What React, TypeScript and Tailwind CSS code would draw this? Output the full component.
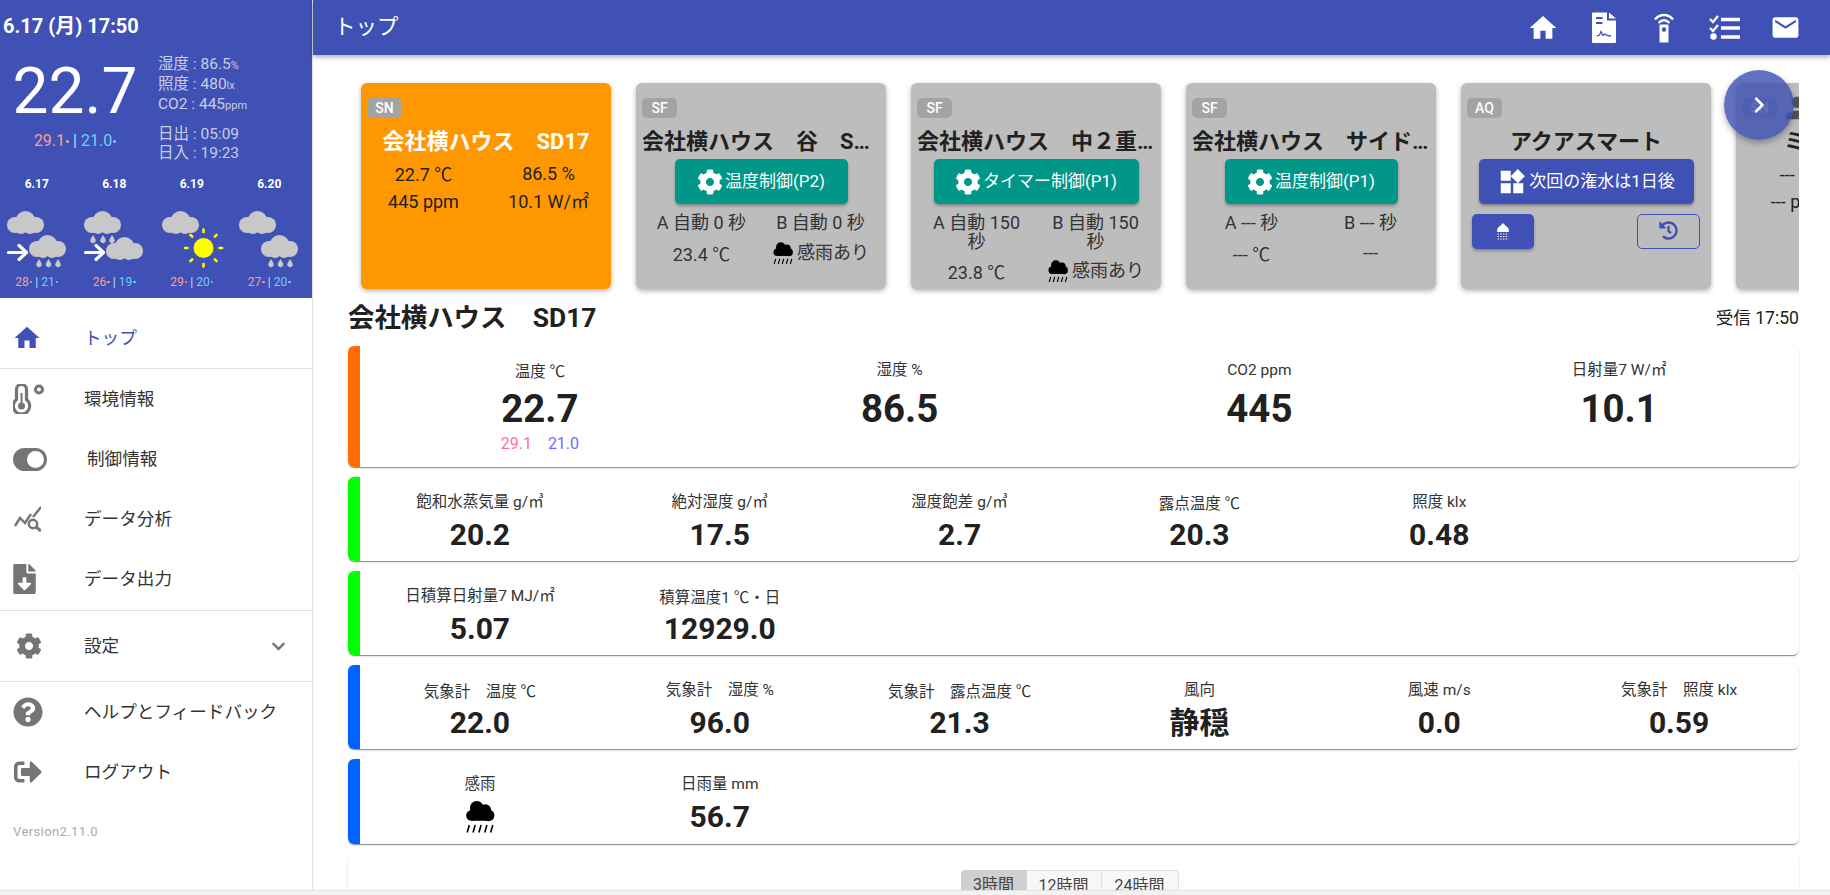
import type { ReactNode } from "react";
import { FaChevronDown, FaCog, FaFileDownload, FaHistory, FaQuestionCircle, FaSignOutAlt } from "react-icons/fa";
import { MdChevronRight, MdEmail, MdHome, MdPerson, MdWidgets } from "react-icons/md";

const matShadow = "shadow-[0_2px_1px_-1px_rgba(0,0,0,0.3),0_1px_1px_0_rgba(0,0,0,0.14),0_1px_3px_0_rgba(0,0,0,0.12)]";

// Roboto draws a narrow degree sign, the reference has the wide CJK one
function Txt({ text }: { text: string }) {
  const parts = text.split("℃");
  if (parts.length === 1) return <>{text}</>;
  return (
    <>
      {parts[0]}
      <span className="font-['Noto_Sans_CJK_JP']">℃</span>
      {parts[1]}
    </>
  );
}

function Cloud({ x, y, fill = "#c8c8c8" }: { x: number; y: number; fill?: string }) {
  return (
    <g transform={`translate(${x} ${y})`} fill={fill}>
      <circle cx="18.5" cy="10" r="10" />
      <circle cx="8" cy="14" r="8" />
      <circle cx="29" cy="14" r="8" />
      <circle cx="14" cy="17" r="6" />
      <circle cx="23" cy="17" r="6" />
    </g>
  );
}

function Drops({ xs, y }: { xs: number[]; y: number }) {
  return (
    <g fill="#c8c8c8">
      {xs.map((x) => (
        <path key={x} d={`M${x} ${y}l2.4 4a2.8 2.8 0 1 1-4.8 0z`} />
      ))}
    </g>
  );
}

function Arrow() {
  return <path d="M6.500 43.500h18M17 36.500l7.500 7-7.500 7" fill="none" stroke="#fff" strokeWidth="3.200" strokeLinecap="round" strokeLinejoin="round" />;
}

function Sun() {
  const rays = [0, 45, 90, 135, 180, 225, 270, 315];
  return (
    <g>
      <circle cx="46.5" cy="39" r="10" fill="#ffff00" />
      {rays.map((r) => (
        <line key={r} x1="46.5" y1="23" x2="46.5" y2="20.5" stroke="#ffff00" strokeWidth="2.6" strokeLinecap="round" transform={`rotate(${r} 46.5 39)`} />
      ))}
    </g>
  );
}

function WeatherIcon({ type }: { type: number }) {
  return (
    <svg viewBox="0 0 70 62" className="block mx-auto w-[70px] h-[62px]">
      <Cloud x={5} y={2} />
      {type === 1 && (
        <>
          <Arrow />
          <Cloud x={27} y={26} />
          <Drops xs={[37, 46.5, 56]} y={50} />
        </>
      )}
      {type === 2 && (
        <>
          <Drops xs={[14, 24, 33]} y={26} />
          <Arrow />
          <Cloud x={27} y={28} />
        </>
      )}
      {type === 3 && <Sun />}
      {type === 4 && (
        <>
          <Cloud x={27} y={26} />
          <Drops xs={[37, 46.5, 56]} y={50} />
        </>
      )}
    </svg>
  );
}

function RainCloud({ className }: { className: string }) {
  return (
    <svg viewBox="0 0 30 32" className={className}>
      <g fill="#000">
        <circle cx="12" cy="8" r="6.5" />
        <circle cx="20" cy="10" r="5.5" />
        <circle cx="7" cy="15" r="5" />
        <circle cx="23" cy="15" r="5.5" />
        <rect x="7" y="11" width="16" height="9" />
      </g>
      <path d="M5 24l-2 7M10.500 24l-2 7M16 24l-2 7M21.500 24l-2 7M27 24l-2 7" stroke="#000" strokeWidth="1.5" />
    </svg>
  );
}

function ThermoIcon() {
  return (
    <svg viewBox="0 0 32 30" className="w-[32px] h-[30px]" fill="none" stroke="#757575">
      <path d="M3.500 5.500a5 5 0 0 1 10 0v10a8.200 8.200 0 1 1-10 0z" strokeWidth="3.200" />
      <circle cx="8.500" cy="22" r="3.500" fill="#757575" stroke="none" />
      <rect x="7.500" y="9" width="2" height="12" fill="#757575" stroke="none" />
      <circle cx="26" cy="5.500" r="3.500" strokeWidth="3" />
    </svg>
  );
}

function ToggleIcon() {
  return (
    <span className="flex items-center justify-end w-[34px] h-[23px] rounded-full bg-[#757575] pr-[3px]">
      <span className="w-[17px] h-[17px] rounded-full bg-white" />
    </span>
  );
}

function AnalysisIcon() {
  return (
    <svg viewBox="0 0 28 26" className="w-[28px] h-[26px]" fill="none" stroke="#757575" strokeWidth="2.400">
      <path d="M2 20l5-8 5 5 6-9M20 11l8-10" />
      <circle cx="20" cy="18" r="4.200" />
      <path d="M23 21l5 4" strokeWidth="3" />
    </svg>
  );
}

function DocIcon() {
  return (
    <svg viewBox="0 0 24 31" className="w-[24px] h-[31px]">
      <path d="M0 1.500a1 1 0 0 1 1-1h14v8h9v21.500a1 1 0 0 1-1 1h-22a1 1 0 0 1-1-1z" fill="#fff" />
      <path d="M17 0.500l7 6h-7z" fill="#fff" />
      <path d="M4 6h6.500M4 11h6.500" stroke="#3f51b5" strokeWidth="2.200" />
      <path d="M4.500 24l3-1 1.500-3.500 2 4 2-1.500 2 1.500 4 .5" fill="none" stroke="#3f51b5" strokeWidth="1.300" />
    </svg>
  );
}

function RemoteIcon() {
  return (
    <svg viewBox="0 0 20 30" className="w-[20px] h-[30px]">
      <path d="M1 6.500c5-6 13-6 18 0M4.500 10c3.500-3.500 7.500-3.500 11 0" fill="none" stroke="#fff" strokeWidth="2.400" />
      <path d="M5.500 12.500a1 1 0 0 1 1-1h7a1 1 0 0 1 1 1v16a1 1 0 0 1-1 1h-7a1 1 0 0 1-1-1z" fill="#fff" />
      <circle cx="10" cy="16.500" r="2.200" fill="#3f51b5" />
    </svg>
  );
}

function ListIcon() {
  return (
    <svg viewBox="0 0 31 25" className="w-[31px] h-[25px]" fill="none" stroke="#fff">
      <path d="M1 4l3 3 5-6M1 13l3 3 5-6" strokeWidth="2.200" />
      <path d="M12 4.500h19M12 13h19M12 22h19" strokeWidth="3.600" />
      <circle cx="4.500" cy="21.500" r="3.200" fill="#fff" stroke="none" />
    </svg>
  );
}

function ShowerIcon() {
  return (
    <svg viewBox="0 0 14 17" className="w-[14px] h-[17px]">
      <path d="M7 0l3 3c2 1 3 3 3 6h-12c0-3 1-5 3-6z" fill="#fff" />
      <path d="M1.500 11h11M1.500 13.500h11M1.500 16h11" stroke="#fff" strokeWidth="1.200" strokeDasharray="1.500 1.200" />
    </svg>
  );
}

function Badge({ text }: { text: string }) {
  return (
    <span className="flex items-center justify-center h-[20px] w-[35px] rounded-[5px] bg-[#a3a3a3] text-white text-[14px] font-medium">
      {text}
    </span>
  );
}

function CardShell({ children, tone = "gray" }: { children: ReactNode; tone?: "gray" | "orange" }) {
  const bg = tone === "orange" ? "bg-[#ff9800]" : "bg-[#bdbdbd]";
  return (
    <div className={`shrink-0 w-[250px] h-[206px] rounded-[6px] pt-[15px] ${bg} shadow-[0_2px_5px_rgba(0,0,0,0.3)]`}>{children}</div>
  );
}

function CardTitle({ text, color = "text-[#212121]" }: { text: string; color?: string }) {
  return <div className={`mt-[7px] mx-[6px] text-center text-[22px] leading-[34px] font-bold truncate ${color}`}>{text}</div>;
}

function SensorCard({ badge, title, cells, tone, person }: { badge: string; title: string; cells: string[]; tone?: "orange"; person?: boolean }) {
  return (
    <CardShell tone={tone}>
      <div className="flex items-center pl-[6px] gap-[3px]">
        <Badge text={badge} />
        {person && <MdPerson className="w-[34px] h-[34px] -my-[8px] text-[#555]" />}
      </div>
      <CardTitle text={title} color={tone === "orange" ? "text-white" : undefined} />
      <div className="mt-[5px] grid grid-cols-2 gap-y-[9px] text-center text-[18px] leading-[19px] text-[#212121]">
        {cells.map((c) => (
          <div key={c} className="h-[19px]">
            <Txt text={c} />
          </div>
        ))}
      </div>
    </CardShell>
  );
}

function ControlCard({ title, button, btnW, a, b, temp, rain }: { title: string; button: string; btnW: string; a: string; b: string; temp: string; rain: string }) {
  return (
    <CardShell>
      <div className="pl-[6px]">
        <Badge text="SF" />
      </div>
      <CardTitle text={title} />
      <div className={`mx-auto h-[45px] rounded-[5px] bg-[#009688] flex items-center justify-center gap-[2px] text-white text-[17px] shadow-[0_2px_3px_rgba(0,0,0,0.3)] ${btnW}`}>
        <FaCog className="w-[26px] h-[26px]" />
        <span>{button}</span>
      </div>
      <div className="mt-[10px] mx-[6px] grid grid-cols-2 gap-y-[11px] text-center text-[18px] leading-[18.5px] text-[#333]">
        <div className="px-[8px]">{a}</div>
        <div className="px-[8px]">{b}</div>
        <div className="h-[18.5px]">
          <Txt text={temp} />
        </div>
        <div className="flex items-center justify-center gap-[3px]">
          {rain !== "---" && <RainCloud className="w-[22px] h-[24px] -my-[4px]" />}
          <span>{rain}</span>
        </div>
      </div>
    </CardShell>
  );
}

function AquaCard() {
  return (
    <CardShell>
      <div className="pl-[6px]">
        <Badge text="AQ" />
      </div>
      <CardTitle text="アクアスマート" />
      <div className="mx-auto w-[215px] h-[45px] rounded-[5px] bg-[#3f51b5] flex items-center justify-center gap-[2px] text-white text-[17px] shadow-[0_2px_3px_rgba(0,0,0,0.3)]">
        <MdWidgets className="w-[30px] h-[30px]" />
        <span>次回の潅水は1日後</span>
      </div>
      <div className="mt-[10px] pl-[11px] pr-[11px] flex justify-between">
        <div className="w-[62px] h-[35px] rounded-[5px] bg-[#3f51b5] flex items-center justify-center shadow-[0_2px_3px_rgba(0,0,0,0.3)]">
          <ShowerIcon />
        </div>
        <div className="w-[63px] h-[35px] rounded-[5px] border border-[#3f51b5] flex items-center justify-center pb-[2px]">
          <FaHistory className="w-[19px] h-[19px] text-[#3f51b5]" />
        </div>
      </div>
    </CardShell>
  );
}

type Metric = { label: string; value?: string; icon?: boolean };

function MetricRow({ color, items, h = "h-[84px]" }: { color: string; items: Metric[]; h?: string }) {
  return (
    <div className={`flex rounded-[6px] bg-white overflow-hidden ${h} ${matShadow}`}>
      <div className={`w-[12px] shrink-0 ${color}`} />
      <div className="flex-1 grid grid-cols-6">
        {items.map((m) => (
          <div key={m.label} className="pt-[15px] text-center">
            <div className="h-[20px] text-[15.5px] leading-[20px] text-[#333]">
              <Txt text={m.label} />
            </div>
            <div className="mt-[5px] h-[36px] text-[30px] leading-[36px] font-bold text-[#212121]">
              {m.icon ? <RainCloud className="mx-auto w-[32px] h-[35px]" /> : m.value}
            </div>
          </div>
        ))}
      </div>
    </div>
  );
}

function BigMetric({ label, value, children }: { label: string; value: string; children?: ReactNode }) {
  return (
    <div className="pt-[14px]">
      <div className="h-[20px] text-[15.5px] leading-[20px] text-[#333]">
        <Txt text={label} />
      </div>
      <div className="mt-[6px] text-[38.4px] leading-[46px] font-bold">{value}</div>
      {children}
    </div>
  );
}

function TempPair({ hi, lo, small }: { hi: string; lo: string; small?: boolean }) {
  const dot = small ? "w-[2.5px] h-[2.5px]" : "w-[3px] h-[3px]";
  return (
    <span>
      <span className="text-[#ff9e93]">
        {hi}
        <span className={`inline-block rounded-full bg-[#ff9e93] align-[3px] ml-[1px] ${dot}`} />
      </span>
      <span className="text-[#a9e4ff]"> | </span>
      <span className="text-[#6fd0f5]">
        {lo}
        <span className={`inline-block rounded-full bg-[#6fd0f5] align-[3px] ml-[1px] ${dot}`} />
      </span>
    </span>
  );
}

const forecast = [
  { date: "6.17", type: 1, hi: "28", lo: "21" },
  { date: "6.18", type: 2, hi: "26", lo: "19" },
  { date: "6.19", type: 3, hi: "29", lo: "20" },
  { date: "6.20", type: 4, hi: "27", lo: "20" },
];

function Stat({ label, value, unit }: { label: string; value: string; unit?: string }) {
  return (
    <div>
      {label} : {value}
      {unit && <span className="text-[11px]">{unit}</span>}
    </div>
  );
}

function NavItem({ icon, label, active, textPad = "", className = "h-[60px]", right }: { icon: ReactNode; label: string; active?: boolean; textPad?: string; className?: string; right?: ReactNode }) {
  return (
    <div className={`flex items-center ${className}`}>
      <div className="w-[84px] pl-[13px] shrink-0 flex items-center">{icon}</div>
      <div className={`flex-1 text-[17.6px] ${textPad} ${active ? "text-[#3f51b5]" : "text-[#333]"}`}>{label}</div>
      {right}
    </div>
  );
}

function Sidebar() {
  return (
    <aside className="w-[313px] shrink-0 border-r border-[#e0e0e0] bg-white">
      <div className="h-[298px] bg-[#3f51b5] text-white">
        <div className="h-[52px] pl-[3px] flex items-center text-[20px] font-bold">6.17 (月) 17:50</div>
        <div className="flex pt-[3px]">
          <div className="w-[150px] text-center">
            <div className="text-[64px] leading-[74px] font-normal">22.7</div>
            <div className="text-[16px] leading-[24px]">
              <TempPair hi="29.1" lo="21.0" />
            </div>
          </div>
          <div className="pl-[8px] text-[15.5px] leading-[19px] text-[#c9cde0]">
            <Stat label="湿度" value="86.5" unit="%" />
            <Stat label="照度" value="480" unit="lx" />
            <Stat label="CO2" value="445" unit="ppm" />
            <div className="h-[10px]" />
            <Stat label="日出" value="05:09" />
            <Stat label="日入" value="19:23" />
          </div>
        </div>
        <div className="grid grid-cols-4 w-[310px] -ml-[2px] mt-[13px]">
          {forecast.map((f) => (
            <div key={f.date} className="text-center">
              <div className="text-[12px] leading-[16px] font-bold">{f.date}</div>
              <div className="mt-[17px]">
                <WeatherIcon type={f.type} />
              </div>
              <div className="text-[12px] leading-[20px] mt-[1px]">
                <TempPair hi={f.hi} lo={f.lo} small />
              </div>
            </div>
          ))}
        </div>
      </div>
      <nav>
        <div className="pt-[10px] border-b border-[#e0e0e0]">
          <NavItem active label="トップ" icon={<MdHome className="w-[30px] h-[30px] text-[#3f51b5] -ml-[1px]" />} />
        </div>
        <NavItem label="環境情報" icon={<ThermoIcon />} />
        <NavItem label="制御情報" textPad="pl-[3px]" icon={<ToggleIcon />} />
        <NavItem label="データ分析" icon={<AnalysisIcon />} />
        <div className="border-b border-[#e0e0e0] pb-[1px]">
          <NavItem label="データ出力" icon={<FaFileDownload className="w-[23px] h-[30px] text-[#757575]" />} />
        </div>
        <div className="border-b border-[#e0e0e0]">
          <NavItem
            label="設定"
            className="h-[70px]"
            icon={<FaCog className="w-[26px] h-[26px] text-[#757575] ml-[3px]" />}
            right={<FaChevronDown className="w-[15px] h-[15px] mr-[26px] text-[#757575]" />}
          />
        </div>
        <NavItem label="ヘルプとフィードバック" icon={<FaQuestionCircle className="w-[30px] h-[30px] text-[#757575]" />} />
        <NavItem label="ログアウト" icon={<FaSignOutAlt className="w-[30px] h-[28px] text-[#757575]" />} />
        <div className="pl-[13px] pt-[20px] text-[13px] leading-[20px] tracking-[0.4px] text-[#aaa]">Version2.11.0</div>
      </nav>
    </aside>
  );
}

function Header() {
  return (
    <header className="relative z-10 h-[55px] shrink-0 bg-[#3f51b5] flex items-center pl-[21px] pr-[29px] text-white shadow-[0_2px_5px_rgba(0,0,0,0.35)]">
      <div className="flex-1 text-[21.5px]">トップ</div>
      <div className="flex items-center">
        <MdHome className="w-[32px] h-[32px]" />
        <div className="ml-[33px]">
          <DocIcon />
        </div>
        <div className="ml-[38px]">
          <RemoteIcon />
        </div>
        <div className="ml-[35px]">
          <ListIcon />
        </div>
        <MdEmail className="w-[31px] h-[31px] ml-[30px]" />
      </div>
    </header>
  );
}

export default function App() {
  return (
    <div className="relative w-[1830px] h-[895px] overflow-hidden flex flex-col bg-white text-[#212121] font-[Roboto,'Noto_Sans_CJK_JP',sans-serif]">
      <div className="flex flex-1 min-h-0">
        <Sidebar />
        <main className="flex-1 min-w-0 flex flex-col">
          <Header />
          <div className="flex-1 min-h-0 overflow-hidden pl-[35px] pr-[31px]">
            <div className="flex gap-[25px] overflow-hidden pl-[13px] pt-[28px] pb-[7px]">
              <SensorCard tone="orange" badge="SN" title="会社横ハウス　SD17" cells={["22.7 ℃", "86.5 %", "445 ppm", "10.1 W/㎡"]} />
              <ControlCard title="会社横ハウス　谷　SD18" button="温度制御(P2)" btnW="w-[173px]" a="A 自動 0 秒" b="B 自動 0 秒" temp="23.4 ℃" rain="感雨あり" />
              <ControlCard title="会社横ハウス　中２重SD19" button="タイマー制御(P1)" btnW="w-[205px]" a="A 自動 150 秒" b="B 自動 150 秒" temp="23.8 ℃" rain="感雨あり" />
              <ControlCard title="会社横ハウス　サイドSD20" button="温度制御(P1)" btnW="w-[173px]" a="A --- 秒" b="B --- 秒" temp="--- ℃" rain="---" />
              <AquaCard />
              <SensorCard person badge="SN" title="ミストセンサー" cells={["--- ℃", "--- %", "--- ppm", "--- W/㎡"]} />
            </div>
            <div className="h-[50px] pb-[5px] flex items-center justify-between">
              <div className="text-[26.4px] font-bold">会社横ハウス　SD17</div>
              <div className="text-[17.6px]">受信 17:50</div>
            </div>
            <div className={`flex h-[121px] rounded-[6px] bg-white overflow-hidden ${matShadow}`}>
              <div className="w-[12px] shrink-0 bg-[#ff6d00]" />
              <div className="flex-1 grid grid-cols-4 text-center">
                <BigMetric label="温度 ℃" value="22.7">
                  <div className="mt-[2px] text-[16px] leading-[20px] flex justify-center gap-[16px]">
                    <span className="text-[#ff6f9c]">29.1</span>
                    <span className="text-[#6d6dff]">21.0</span>
                  </div>
                </BigMetric>
                <BigMetric label="湿度 %" value="86.5" />
                <BigMetric label="CO2 ppm" value="445" />
                <BigMetric label="日射量7 W/㎡" value="10.1" />
              </div>
            </div>
            <div className="mt-[10px] flex flex-col gap-[10px]">
              <MetricRow
                color="bg-[#00ff00]"
                items={[
                  { label: "飽和水蒸気量 g/㎥", value: "20.2" },
                  { label: "絶対湿度 g/㎥", value: "17.5" },
                  { label: "湿度飽差 g/㎥", value: "2.7" },
                  { label: "露点温度 ℃", value: "20.3" },
                  { label: "照度 klx", value: "0.48" },
                ]}
              />
              <MetricRow
                color="bg-[#00ff00]"
                items={[
                  { label: "日積算日射量7 MJ/㎡", value: "5.07" },
                  { label: "積算温度1 ℃・日", value: "12929.0" },
                ]}
              />
              <MetricRow
                color="bg-[#0062ff]"
                items={[
                  { label: "気象計　温度 ℃", value: "22.0" },
                  { label: "気象計　湿度 %", value: "96.0" },
                  { label: "気象計　露点温度 ℃", value: "21.3" },
                  { label: "風向", value: "静穏" },
                  { label: "風速 m/s", value: "0.0" },
                  { label: "気象計　照度 klx", value: "0.59" },
                ]}
              />
              <MetricRow
                color="bg-[#0062ff]"
                h="h-[85px]"
                items={[
                  { label: "感雨", icon: true },
                  { label: "日雨量 mm", value: "56.7" },
                ]}
              />
              <div className={`h-[200px] rounded-[6px] bg-white pt-[16px] flex justify-center ${matShadow}`}>
                <div className="flex h-[30px] text-[16px] text-[#444] pr-[8px]">
                  <div className="w-[66px] flex items-center justify-center rounded-tl-[4px] bg-[#d0d0d0]">3時間</div>
                  <div className="w-[75px] flex items-center justify-center border-t border-r border-[#e0e0e0] bg-[#f7f7f7]">12時間</div>
                  <div className="w-[77px] flex items-center justify-center border-t border-r border-[#e0e0e0] rounded-tr-[4px] bg-[#f7f7f7]">24時間</div>
                </div>
              </div>
            </div>
          </div>
        </main>
      </div>
      <div className="relative z-10 h-[5px] shrink-0 bg-[#f2f2f2] border-t border-[#e4e4e4]" />
      <button className="absolute left-[1724px] top-[70px] z-20 w-[70px] h-[70px] rounded-full bg-[rgba(63,81,181,0.82)] flex items-center justify-center text-white shadow-[0_3px_6px_rgba(0,0,0,0.3)]">
        <MdChevronRight className="w-[32px] h-[32px]" />
      </button>
    </div>
  );
}
